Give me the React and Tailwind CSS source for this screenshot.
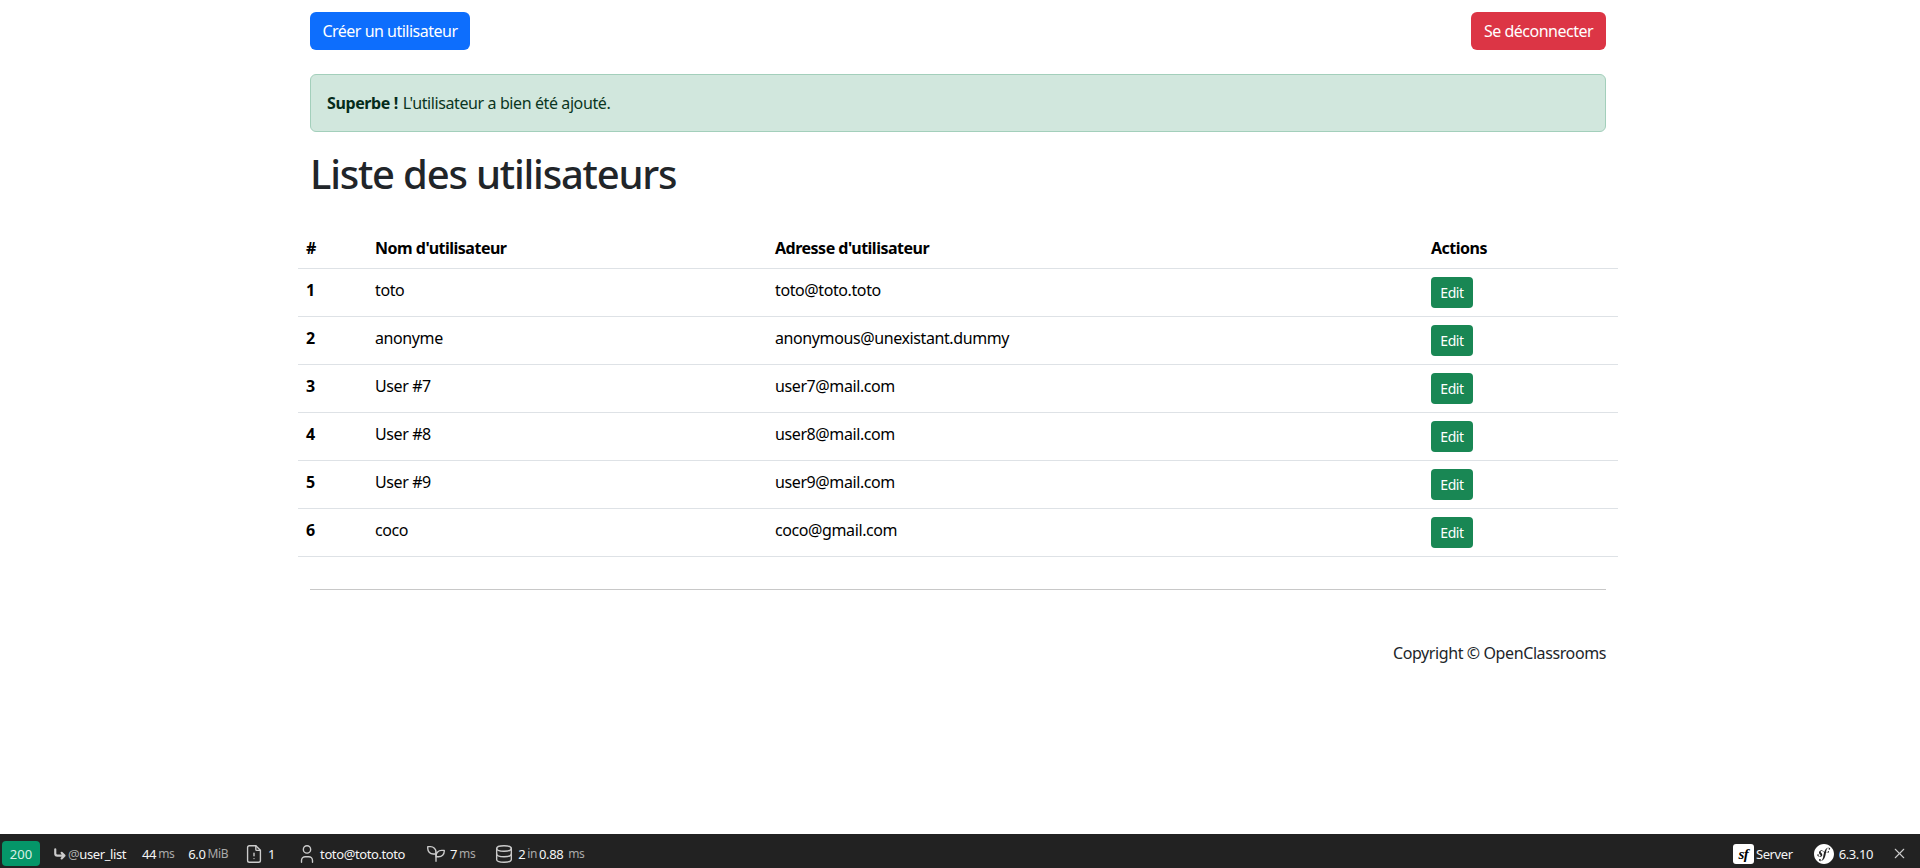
import { SiSymfony } from 'react-icons/si'
import { TbCornerDownRight, TbFileAlert, TbUser, TbDatabase, TbX } from 'react-icons/tb'

const users = [
  { id: 1, name: 'toto', email: 'toto@toto.toto' },
  { id: 2, name: 'anonyme', email: 'anonymous@unexistant.dummy' },
  { id: 3, name: 'User #7', email: 'user7@mail.com' },
  { id: 4, name: 'User #8', email: 'user8@mail.com' },
  { id: 5, name: 'User #9', email: 'user9@mail.com' },
  { id: 6, name: 'coco', email: 'coco@gmail.com' },
]

function Seedling() {
  return (
    <svg viewBox="0 0 24 24" fill="none" stroke="currentColor" strokeWidth="1.5" strokeLinecap="round" strokeLinejoin="round" className="ml-[20px] w-[22px] h-[22px] text-[#cccccc]">
      <path d="M12 10a6 6 0 0 0 -6 -6h-3v2a6 6 0 0 0 6 6h3" />
      <path d="M12 14a6 6 0 0 1 6 -6h3v1a6 6 0 0 1 -6 6h-3" />
      <path d="M12 20l0 -10" />
    </svg>
  )
}

function Toolbar() {
  return (
    <div className="absolute left-0 right-0 bottom-0 h-[34px] pt-[5px] bg-[#222222] flex items-center text-[13px] text-[#f5f5f5] font-['Noto_Sans',sans-serif] tracking-[-0.4px]">
      <div className="ml-[2px] w-[38px] h-[25px] rounded-[4px] bg-[#059669] text-[#d8f0e6] flex items-center justify-center tracking-normal">200</div>
      <TbCornerDownRight className="ml-[11px] text-[17px] stroke-[3] text-[#cccccc]" />
      <span className="text-[#aaaaaa]">@</span><span>user_list</span>
      <span className="ml-[16px]">44</span><span className="ml-[2px] text-[12px] text-[#aaaaaa]">ms</span>
      <span className="ml-[14px]">6.0</span><span className="ml-[2px] text-[12px] text-[#aaaaaa]">MiB</span>
      <TbFileAlert className="ml-[15px] text-[22px] text-[#cccccc] stroke-[1.5]" />
      <span className="ml-[3px]">1</span>
      <TbUser className="ml-[21px] text-[22px] text-[#cccccc] stroke-[1.5]" />
      <span className="ml-[2px]">toto@toto.toto</span>
      <Seedling />
      <span className="ml-[3px]">7</span><span className="ml-[2px] text-[12px] text-[#aaaaaa]">ms</span>
      <TbDatabase className="ml-[18px] text-[22px] text-[#cccccc] stroke-[1.5]" />
      <span className="ml-[3px]">2</span><span className="ml-[2px] text-[12px] text-[#aaaaaa]">in</span>
      <span className="ml-[2px]">0.88</span><span className="ml-[5px] text-[12px] text-[#aaaaaa]">ms</span>

      <div className="ml-auto w-[21px] h-[20px] rounded-[3px] bg-white text-black flex items-center justify-center font-['Liberation_Serif',serif] italic font-bold text-[15px]">sf</div>
      <span className="ml-[2px]">Server</span>
      <SiSymfony className="ml-[21px] text-[20px] text-white" />
      <span className="ml-[5px]">6.3.10</span>
      <TbX className="ml-[18px] mr-[12px] text-[17px] text-[#cccccc] stroke-[1.5]" />
    </div>
  )
}

export default function App() {
  return (
    <div className="relative h-[868px] overflow-hidden bg-white text-[16px] leading-[24px] text-[#212529] font-['Noto_Sans',sans-serif] tracking-[-0.4px]">
      <div className="w-[1320px] ml-[298px] px-[12px]">
        <div className="pt-[12px] flex justify-between">
          <button className="h-[38px] w-[160px] rounded-[6px] bg-[#0d6efd] text-white tracking-[-0.5px]">Créer un utilisateur</button>
          <button className="h-[38px] w-[135px] rounded-[6px] bg-[#dc3545] text-white tracking-[-0.5px]">Se déconnecter</button>
        </div>
        <div className="mt-[24px] h-[58px] px-[16px] flex items-center rounded-[6px] border border-[#a3cfbb] bg-[#d1e7dd] text-[#0a3622]">
          <strong className="font-bold text-[#052c1b] mr-[5px]">Superbe !</strong> L'utilisateur a bien été ajouté.
        </div>
        <h1 className="mt-[18px] text-[40px] leading-[48px] font-medium tracking-[-1.2px]">Liste des utilisateurs</h1>

        <table className="-mx-[12px] mt-[22px] w-[1320px] table-fixed text-black text-left">
          <colgroup>
            <col className="w-[69px]" />
            <col className="w-[400px]" />
            <col className="w-[656px]" />
            <col />
          </colgroup>
          <thead>
            <tr className="h-[48px] border-b border-[#dee2e6] tracking-[-0.5px]">
              <th className="px-[8px] pt-[8px] font-bold">#</th>
              <th className="px-[8px] pt-[8px] font-bold">Nom d'utilisateur</th>
              <th className="px-[8px] pt-[8px] font-bold">Adresse d'utilisateur</th>
              <th className="px-[8px] pt-[8px] font-bold">Actions</th>
            </tr>
          </thead>
          <tbody>
            {users.map((u) => (
              <tr key={u.id} className="h-[48px] border-b border-[#dee2e6]">
                <th className="px-[8px] pb-[5px] font-bold">{u.id}</th>
                <td className="px-[8px] pb-[5px]">{u.name}</td>
                <td className="px-[8px] pb-[5px]">{u.email}</td>
                <td className="px-[8px]">
                  <button className="w-[42px] h-[31px] pt-[1px] rounded-[4px] bg-[#198754] text-white text-[14px] block">Edit</button>
                </td>
              </tr>
            ))}
          </tbody>
        </table>

        <hr className="mt-[32px] border-t border-[#c8c8c8]" />
        <p className="mt-[51px] text-right">Copyright © OpenClassrooms</p>
      </div>
      <Toolbar />
    </div>
  )
}
